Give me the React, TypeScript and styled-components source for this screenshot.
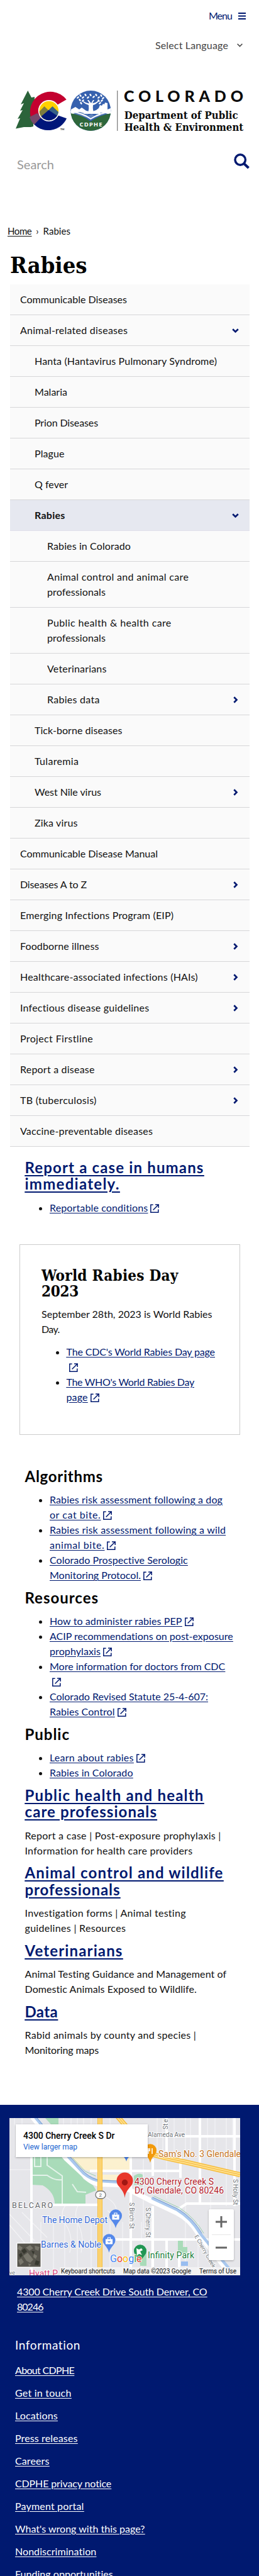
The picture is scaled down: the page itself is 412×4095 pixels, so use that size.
import React, { useLayoutEffect, useRef, useState } from "react";
import styled, { createGlobalStyle } from "styled-components";

const navy = "#001970";
const sans = `"Trebuchet MS", Lato, "Open Sans", sans-serif`;
const slab = `"Museo Slab", "DejaVu Serif Condensed", "DejaVu Serif", serif`;

const GlobalStyle = createGlobalStyle`
  * { box-sizing: border-box; }
  body { margin: 0; background: #fff; color: #111; font: 16px/24px ${sans}; }
  a { color: inherit; }
  h1, h2, p, ul { margin: 0; }
`;

/* Text tracked so that each line keeps its designed width in any fallback font. */
const Tracked = styled.span`
  white-space: nowrap;
  text-decoration: inherit;
`;

function Fit({ w, children }: { w: number; children: string }) {
  const ref = useRef<HTMLSpanElement>(null);
  const [spacing, setSpacing] = useState<number | null>(null);
  useLayoutEffect(() => {
    if (ref.current && spacing === null) {
      setSpacing((w - ref.current.getBoundingClientRect().width) / (children.length - 0.5));
    }
  }, [w, children, spacing]);
  return (
    <Tracked ref={ref} style={{ letterSpacing: spacing ?? 0 }}>
      {children}
    </Tracked>
  );
}

type Line = [string, number];

function Lines({ lines }: { lines: Line[] }) {
  return (
    <>
      {lines.map(([text, w], i) => (
        <React.Fragment key={i}>
          {i > 0 && <br />}
          <Fit w={w}>{text}</Fit>
        </React.Fragment>
      ))}
    </>
  );
}

const Page = styled.div`
  width: 412px;
  height: 4095px;
  overflow: hidden;
`;

/* ---------- header ---------- */

const Header = styled.header`
  display: flex;
  flex-direction: column;
  height: 355px;
  padding-top: 13px;
`;

const MenuButton = styled.a`
  display: flex;
  align-items: center;
  justify-content: flex-end;
  gap: 10px;
  padding-right: 21px;
  color: ${navy};
  text-decoration: none;
`;

const LanguagePicker = styled.div`
  display: flex;
  align-items: center;
  justify-content: flex-end;
  gap: 14px;
  margin-top: 23px;
  padding-right: 26px;
  color: #444;
`;

const Brand = styled.a`
  display: block;
  height: 64px;
  margin: 60px 0 0 25px;
`;

const LogoSvg = styled.svg`
  display: block;
  overflow: visible;
`;

const SearchBar = styled.div`
  display: flex;
  justify-content: space-between;
  align-items: flex-start;
  margin-top: 36px;
  padding: 0 15px 0 27px;
  color: #999;
  font-size: 20px;
`;

const SearchLabel = styled.span`
  margin-top: 5px;
`;

const Breadcrumb = styled.nav`
  display: flex;
  padding-left: 12px;
  font-size: 15px;
  gap: 7px;
`;

const Crumb = styled.a`
  color: #111;
  text-decoration: underline;
  text-underline-offset: 2px;
`;

const Title = styled.h1`
  margin: 22px 0 11px 16px;
  font: 700 36px/40px ${slab};
  color: #000;
`;

/* ---------- side navigation ---------- */

const SideNav = styled.ul`
  width: 381px;
  margin-left: 16px;
  padding: 0;
  list-style: none;
  background: #fafafa;
`;

const NavRow = styled.li<{ $level: number; $active?: boolean }>`
  display: flex;
  align-items: center;
  justify-content: space-between;
  padding: 12px 17px 12px ${(p) => [16, 39, 59][p.$level]}px;
  border-bottom: 1px solid ${(p) => (p.$active ? "#dfdfe9" : "#d6d6d8")};
  background: ${(p) => (p.$active ? "#e6e8f0" : "#fafafa")};
  font-weight: ${(p) => (p.$active ? 700 : 400)};
`;

/* ---------- article ---------- */

const Article = styled.main`
  height: 1523px;
  padding: 20px 0 0 39.5px;
`;

const Heading = styled.h2<{ $link?: boolean }>`
  margin: 10.6px 0 12px;
  font-size: 24px;
  line-height: 26.4px;
  color: ${(p) => (p.$link ? navy : "#000")};
  text-decoration: ${(p) => (p.$link ? "underline" : "none")};
  text-decoration-thickness: 2px;
  text-underline-offset: 3px;
  &:first-child { margin-top: 0; }
`;

const LinkList = styled.ul`
  padding-left: 39.5px;
`;

const TextLink = styled.a`
  color: ${navy};
  text-decoration: underline;
  text-underline-offset: 2px;
`;

const Card = styled.section`
  width: 351px;
  height: 303px;
  margin: 46px 0 53px -9px;
  padding: 36px 0 0 34.5px;
  border: 1px solid #ccc;
`;

const CardTitle = styled.h2`
  margin-bottom: 12px;
  font: 700 24px/25px ${slab};
  color: #000;
`;

const CardText = styled.p`
  margin-bottom: 12px;
`;

/* ---------- footer ---------- */

const Footer = styled.footer`
  min-height: 749px;
  padding: 21px 0 0 15px;
  background: #001970;
  color: #fff;
`;

const MapFrame = styled.div`
  position: relative;
  width: 367px;
  height: 250px;
  overflow: hidden;
  font-family: Roboto, sans-serif;
`;

const MapInfo = styled.div`
  position: absolute;
  left: 10px;
  top: 10px;
  width: 210px;
  height: 52px;
  padding: 9px 12px;
  background: #fff;
  box-shadow: 0 1px 3px rgba(0, 0, 0, 0.3);
  color: #000;
  font-size: 14px;
  line-height: 18px;
  font-weight: 500;
`;

const MapLink = styled.div`
  color: #1a64d0;
  font-size: 12px;
  font-weight: 400;
`;

const ZoomControl = styled.div`
  position: absolute;
  right: 10px;
  top: 145px;
  width: 40px;
  height: 81px;
  background: #fff;
  border-radius: 2px;
  box-shadow: 0 1px 3px rgba(0, 0, 0, 0.3);
`;

const MapCredits = styled.div`
  position: absolute;
  right: 0;
  bottom: 0;
  display: flex;
  gap: 13px;
  padding: 0 6px 0 2px;
  background: rgba(245, 245, 245, 0.8);
  color: #111;
  font-size: 10px;
  line-height: 13px;
`;

const Address = styled.p`
  padding: 14px 0 0 12px;
  text-decoration: underline;
  text-underline-offset: 2px;
`;

const FooterHeading = styled.div`
  margin: 37px 0 16px 9px;
  font-size: 19px;
`;

const FooterLinks = styled.div`
  display: flex;
  flex-direction: column;
  align-items: flex-start;
  gap: 12px;
  padding-left: 9px;
`;

const FooterLink = styled.a`
  text-decoration: underline;
  text-underline-offset: 2px;
`;

const ExtSvg = styled.svg`
  margin-left: 4px;
  vertical-align: -2px;
`;

/* ---------- icons ---------- */

const ExternalIcon = () => (
  <ExtSvg width="14" height="14" viewBox="0 0 14 14" fill="none" stroke={navy} strokeWidth="1.5">
    <path d="M4.6 1.3H.8v12h12V8.6" />
    <path d="M4.6 9.6 12.6 1.4M8 .9h5.2v5.2" />
  </ExtSvg>
);

const Chevron = ({ open }: { open?: boolean }) => (
  <svg width="11" height="11" viewBox="0 0 11 11" fill="none" stroke={navy} strokeWidth="2.7">
    <path d={open ? "M1.2 3.2 5.5 7.4 9.8 3.2" : "M3.3 1.2 7.5 5.5 3.3 9.8"} />
  </svg>
);

const Logo = () => (
  <LogoSvg width="364" height="66" viewBox="0 0 364 66">
    <path
      fill="#2b633a"
      d="M19.3 0 25 11 30 10 28 57 24 58 13 58 0 60.5 7 44 3 45 11 31 7 32 13 20 8 22Z"
    />
    <path fill="#c3002f" d="M80.7 14.3A32 32 0 1 0 29.5 54L53 32 67.7 21.7Z" />
    <path fill="#76496b" d="M22 42 34 36 46 46 30 54.5Q24 49 22 42Z" />
    <path fill="#00177a" d="M29.5 54 39 44 66 39 81 44.3A32 32 0 0 1 29.5 54Z" />
    <circle cx="52.8" cy="32" r="17" fill="#fff" />
    <clipPath id="sun"><circle cx="52.8" cy="32" r="15.3" /></clipPath>
    <g clipPath="url(#sun)">
      <path fill="#ffd100" d="M37 16h32v32H37z" />
      <path fill="#7d7c40" d="M35 36 45.5 25 57 36V48H35Z" />
      <path fill="#376288" d="M49 34 58.5 25 70 36V48H49Z" />
      <path fill="#00177a" d="M37 44 52.5 31 69 42V49H37Z" />
    </g>
    <text x="71" y="62.5" fontFamily="Lato" fontSize="4" fontWeight="700">TM</text>

    <clipPath id="seal"><circle cx="119.3" cy="32" r="32" /></clipPath>
    <g clipPath="url(#seal)">
      <path fill="#3661ae" d="M87 0h65v64H87z" />
      <path fill="#fff" d="m88 30 7-4 6 4 4-3 7 5 8 2 8-3 4-3 2-5 3 1 2-3 2 1 1-3 4 1v10l5-2v9H88z" />
      <path fill="#6084bd" d="m91 36 11-2 7 2-5 3 12-2-5 5 10-5 6 5 1-5 10 2-4-4 12 1-27 9z" />
      <path fill="#2e673b" d="M87 36q20 3 32 13 14-10 33-13v28H87z" />
      <path fill="none" stroke="#fff" strokeWidth="1.8" d="M87 33q20 3 32.3 12Q133 36 152 33" />
      <path
        fill="#fff"
        d="M115 36q2-7 1-13-5-1-9-5l1-1q5 4 9 3l-3-5 2 0 4 5 3-5 2 0-3 5q5 0 9-4l1 1q-4 5-9 6-1 8 2 13z"
      />
      <g fill="#fff">
        {[
          [99, 11], [103, 8], [107, 11], [111, 7], [115, 11], [119, 7], [124, 10], [128, 7],
          [132, 11], [136, 8], [139, 12], [102, 15], [107, 16], [132, 16], [137, 16], [104, 20], [134, 20],
        ].map(([x, y], i) => (
          <ellipse key={i} cx={x} cy={y} rx="2.2" ry="1.3" transform={`rotate(${i % 2 ? 55 : -40} ${x} ${y})`} />
        ))}
      </g>
    </g>
    <text x="101.5" y="57.3" fill="#fff" fontFamily="Open Sans" fontWeight="700" fontSize="9.6" textLength="36">
      CDPHE
    </text>
    <path stroke="#777" strokeWidth="1.2" d="M161.7 0v64" />
    <g fill="#0b0b0b">
      <text x="172" y="18.2" fontFamily="Lato" fontWeight="900" fontSize="25" textLength="190">
        COLORADO
      </text>
      <g fontFamily="DejaVu Serif Condensed, DejaVu Serif" fontWeight="700" fontSize="16.3">
        <text x="172.7" y="45.3" textLength="181" lengthAdjust="spacingAndGlyphs">Department of Public</text>
        <text x="172.7" y="63.6" textLength="189.5" lengthAdjust="spacingAndGlyphs">{"Health & Environment"}</text>
      </g>
    </g>
  </LogoSvg>
);

const Pin = ({ x, y, s = 1, color }: { x: number; y: number; s?: number; color: string }) => (
  <path
    transform={`translate(${x} ${y}) scale(${s})`}
    fill={color}
    d="M0 0C-1.5-6-4-8.5-7-12.5A10 10 0 1 1 7-12.5C4-8.5 1.5-6 0 0Z"
  />
);

const MapDrawing = () => (
  <svg width="367" height="250" viewBox="0 0 367 250" fontFamily="Roboto">
    <path fill="#e6e6ea" d="M0 0h367v250H0z" />
    <g stroke="#f4f4f6" strokeWidth="1.2" fill="none">
      {[8, 20, 86, 98, 108, 118, 130, 160, 180, 235, 244, 262, 280, 288, 315, 327, 345, 355].map((x) => (
        <path key={x} d={`M${x} 0V60`} />
      ))}
      {[50, 70, 88, 108, 130, 160, 180, 210, 226, 280, 300].map((x) => (
        <path key={x} d={`M${x} 165V250`} />
      ))}
      <path d="M0 82H35M0 153 40 195M0 170 30 205M20 150 60 190M90 138q-12 14 0 32t6 44M110 138q-9 14 0 32t4 44M213 65V185M250 65V128M280 100V150M320 120V180M345 60V140M145 122q25 10 25 25-6 8-14 0" />
    </g>
    <path fill="#a9dbb9" d="M35 60H93L118 97 133 107 138 115 121 122V136H72Q72 118 53 107L35 106Z M57 0H78V10H66Z M198 92q8-6 14-2v18l-14-2z" />
    <g fill="none" stroke="#e4f3ea" strokeWidth="2">
      <path d="M40 60V77H50V60M60 60V75L84 92V136M35 91H60Q72 100 84 98M100 105l8 12 14 1" />
    </g>
    <path fill="#fcf1cf" d="M92 62H192V84H128L112 80Z M148 90H178V105L148 98Z" />
    <g fill="none" stroke="#fff" strokeWidth="4">
      <path d="M35 60V250M65 138H145M128 84H272M218 29H367M150 193H367M193 60V250M228 65V92M250 0V60M303 0V136M272 60V95M228 140V250M250 193V250M270 193V250M268 145 282 136H367M358 0V140" />
    </g>
    <g fill="none" strokeLinecap="round" strokeLinejoin="round">
      <path stroke="#fff" strokeWidth="8" d="M38 0 90 64 118 90Q130 104 145 105L175 106 222 130 265 150Q288 162 300 183L345 240" />
      <path stroke="#a9c8ee" strokeWidth="4.5" d="M42 0 96 64 118 88Q132 99 145 100L175 102M228 128 267 146Q290 160 303 183L350 240" />
      <path stroke="#799bce" strokeWidth="1" d="M44 0 99 64 120 87Q133 98 145 99L175 100M228 126 269 145Q293 160 306 183" />
      <path stroke="#98cdb0" strokeWidth="1" d="M230 124 271 143Q296 160 309 183M101 64 121 85 137 92" />
    </g>
    <g fill="none">
      <path stroke="#f6bd3d" strokeWidth="8" d="M144 0V250" />
      <path stroke="#ffe08b" strokeWidth="5" d="M144 0V250" />
      <path stroke="#f6bd3d" strokeWidth="8" d="M170-5 222 56Q240 62 280 70L367 90" />
      <path stroke="#ffe08b" strokeWidth="5" d="M170-5 222 56Q240 62 280 70L367 90" />
      <path stroke="#f1b43a" strokeWidth="1" d="M144 0V250M170-5 222 56Q240 62 280 70L367 90" />
    </g>
    <path fill="#a9dbb9" d="M268 195h8v10h7v10h-15zM205 208h13v27h-10z" />
    <path fill="#99bdf0" d="M273 228h11v7h-11z" />
    <rect x="137" y="116" width="16" height="12" rx="6" fill="#fff" stroke="#777" strokeWidth="1.3" />
    <text x="142.5" y="125" fontSize="8" fill="#555">2</text>
    <Pin x={224} y={71} color="#f29a0c" />
    <path fill="none" stroke="#fff" strokeWidth="1.6" d="M221 48v9M219 48v4h4v-4M227 48v9" />
    <Pin x={186} y={69} s={0.6} color="#4a80e8" />
    <Pin x={169} y={175} color="#5488ea" />
    <Pin x={158.5} y={214} color="#5488ea" />
    {[[165, 152], [154.5, 191]].map(([x, y]) => (
      <g key={x} fill="none" stroke="#fff" strokeWidth="1.2">
        <path fill="#fff" d={`M${x - 1} ${y + 2}h10v7h-10z`} />
        <path d={`M${x + 2} ${y + 2}v-3h4v3`} />
        <path stroke="#5488ea" d={`M${x + 2} ${y + 5}q2 2 4 0`} />
      </g>
    ))}
    <Pin x={208} y={231} color="#219653" />
    <path fill="#fff" d="m202 207 4 2 4-2 2 3-4 2 3 6-5-2-3 3z" />
    <g transform="translate(183.5 127)">
      <path fill="#e8372c" d="M0 0C-1-9-5-13-9-18A13 13 0 1 1 9-18C5-13 1-9 0 0Z" />
      <circle cy="-24.5" r="4.7" fill="#a11713" />
    </g>
    <g stroke="#fff" strokeWidth="2" paintOrder="stroke" strokeLinejoin="round">
      <text x="220" y="30" fontSize="10.5" fill="#70757a" textLength="59">Alameda Ave</text>
      <text x="237" y="62" fontSize="14" fill="#c6751c" textLength="131">Sam's No. 3 Glendale</text>
      <text x="199" y="106" fontSize="14" fill="#b3202a" textLength="126">4300 Cherry Creek S</text>
      <text x="199" y="120" fontSize="14" fill="#b3202a" textLength="142">Dr, Glendale, CO 80246</text>
      <text x="4" y="142.5" fontSize="12.5" fill="#5f6368" textLength="65">BELCARO</text>
      <text x="52" y="167" fontSize="14" fill="#3267d6" textLength="104">The Home Depot</text>
      <text x="50" y="206" fontSize="14" fill="#3267d6" textLength="96">{"Barnes & Noble"}</text>
      <text x="220" y="223" fontSize="14" fill="#1a7f3c" textLength="74">Infinity Park</text>
      <text x="31" y="252" fontSize="14" fill="#d8437a" textLength="46">Hyatt P</text>
      <text x="0" y="249" fontSize="9" fill="#70757a">ve</text>
      <g fontSize="10" fill="#70757a">
        <text transform="translate(190.5 134) rotate(90)" textLength="42">S Birch St</text>
        <text transform="translate(216.5 142) rotate(90)" textLength="48">S Cherry St</text>
        <text transform="translate(355.5 97) rotate(90)" textLength="41">S Holly St</text>
        <text transform="translate(252 18) rotate(-90)">St</text>
        <text transform="translate(252 7) rotate(-90)">e</text>
        <text fontSize="9" transform="translate(294 188) rotate(60)">E Cherry Creek</text>
      </g>
    </g>
    <text x="160" y="228.5" fontSize="16" stroke="#fff" strokeWidth="1.5" paintOrder="stroke">
      <tspan fill="#4285f4">G</tspan><tspan fill="#ea4335">o</tspan><tspan fill="#fbbc05">o</tspan><tspan fill="#4285f4">g</tspan><tspan fill="#34a853">l</tspan><tspan fill="#ea4335">e</tspan>
    </text>
    <rect x="11" y="198" width="40" height="40" rx="2" fill="#fff" />
    <path fill="#56544c" d="M12.5 199.5h37v37h-37z" />
    <g fill="#79776c">
      <path d="m15 202 6 4-3 5-5-3zM26 206l7-4 5 5-6 4zM40 203l8 2-2 6-5-2zM22 219l7-5 5 6 4 5-5 5-6-3zM14 226l5-3 4 6-6 5zM39 216l5 3-2 5-4-3zM30 231l5 2-4 3z" />
    </g>
    <path fill="#37382f" d="m19 211 5-4 4 5-5 4zM35 211l5 1-2 5zM42 226l6 2-2 6-6-1zM15 217l4-3 2 5-4 3z" />
  </svg>
);

/* ---------- data ---------- */

type NavItem = { level: number; lines: Line[]; arrow?: "open" | "closed"; active?: boolean };

const nav: NavItem[] = [
  { level: 0, lines: [["Communicable Diseases", 170]] },
  { level: 0, lines: [["Animal-related diseases", 171]], arrow: "open" },
  { level: 1, lines: [["Hanta (Hantavirus Pulmonary Syndrome)", 290]] },
  { level: 1, lines: [["Malaria", 52]] },
  { level: 1, lines: [["Prion Diseases", 101]] },
  { level: 1, lines: [["Plague", 47.5]] },
  { level: 1, lines: [["Q fever", 53]] },
  { level: 1, lines: [["Rabies", 48.5]], arrow: "open", active: true },
  { level: 2, lines: [["Rabies in Colorado", 133]] },
  { level: 2, lines: [["Animal control and animal care", 225], ["professionals", 93]] },
  { level: 2, lines: [["Public health & health care", 197.5], ["professionals", 93]] },
  { level: 2, lines: [["Veterinarians", 94.5]] },
  { level: 2, lines: [["Rabies data", 83.5]], arrow: "closed" },
  { level: 1, lines: [["Tick-borne diseases", 139.5]] },
  { level: 1, lines: [["Tularemia", 70]] },
  { level: 1, lines: [["West Nile virus", 106]], arrow: "closed" },
  { level: 1, lines: [["Zika virus", 68.5]] },
  { level: 0, lines: [["Communicable Disease Manual", 219]] },
  { level: 0, lines: [["Diseases A to Z", 106]], arrow: "closed" },
  { level: 0, lines: [["Emerging Infections Program (EIP)", 244.5]] },
  { level: 0, lines: [["Foodborne illness", 125.5]], arrow: "closed" },
  { level: 0, lines: [["Healthcare-associated infections (HAIs)", 283]], arrow: "closed" },
  { level: 0, lines: [["Infectious disease guidelines", 205.5]], arrow: "closed" },
  { level: 0, lines: [["Project Firstline", 116]] },
  { level: 0, lines: [["Report a disease", 118.5]], arrow: "closed" },
  { level: 0, lines: [["TB (tuberculosis)", 121.5]], arrow: "closed" },
  { level: 0, lines: [["Vaccine-preventable diseases", 211]] },
];

type LinkItem = { lines: Line[]; ext?: "inline" | "wrapped" };

const algorithms: LinkItem[] = [
  { lines: [["Rabies risk assessment following a dog", 275], ["or cat bite.", 81]], ext: "inline" },
  { lines: [["Rabies risk assessment following a wild", 280], ["animal bite.", 87]], ext: "inline" },
  { lines: [["Colorado Prospective Serologic", 220], ["Monitoring Protocol.", 145]], ext: "inline" },
];

const resources: LinkItem[] = [
  { lines: [["How to administer rabies PEP", 210.5]], ext: "inline" },
  { lines: [["ACIP recommendations on post-exposure", 292], ["prophylaxis", 81]], ext: "inline" },
  { lines: [["More information for doctors from CDC", 279.5]], ext: "wrapped" },
  { lines: [["Colorado Revised Statute 25-4-607:", 252], ["Rabies Control", 103.5]], ext: "inline" },
];

const publicLinks: LinkItem[] = [
  { lines: [["Learn about rabies", 133.5]], ext: "inline" },
  { lines: [["Rabies in Colorado", 132.5]] },
];

const dayLinks: LinkItem[] = [
  { lines: [["The CDC's World Rabies Day page", 236.5]], ext: "wrapped" },
  { lines: [["The WHO's World Rabies Day", 203.5], ["page", 34]], ext: "inline" },
];

const footerLinks: Line[] = [
  ["About CDPHE", 94.5],
  ["Get in touch", 89.5],
  ["Locations", 68],
  ["Press releases", 99.5],
  ["Careers", 54.5],
  ["CDPHE privacy notice", 153.5],
  ["Payment portal", 109.5],
  ["What's wrong with this page?", 206.5],
  ["Nondiscrimination", 129.5],
  ["Funding opportunities", 156],
];

const Links = ({ items }: { items: LinkItem[] }) => (
  <LinkList>
    {items.map((item, i) => (
      <li key={i}>
        <TextLink>
          <Lines lines={item.lines} />
        </TextLink>
        {item.ext === "wrapped" && <br />}
        {item.ext && <ExternalIcon />}
      </li>
    ))}
  </LinkList>
);

export default function App() {
  return (
    <Page>
      <GlobalStyle />
      <Header>
        <MenuButton>
          <Fit w={37.5}>Menu</Fit>
          <svg width="12" height="11" viewBox="0 0 12 11" stroke={navy} strokeWidth="2">
            <path d="M0 1h12M0 5.5h12M0 10h12" />
          </svg>
        </MenuButton>
        <LanguagePicker>
          <Fit w={116}>Select Language</Fit>
          <svg width="9" height="6" viewBox="0 0 9 6" fill="none" stroke="#444" strokeWidth="1.5">
            <path d="M.6.7 4.5 4.6 8.4.7" />
          </svg>
        </LanguagePicker>
        <Brand><Logo /></Brand>
        <SearchBar>
          <SearchLabel><Fit w={59}>Search</Fit></SearchLabel>
          <svg width="25" height="25" viewBox="0 0 25 25" fill="none" stroke={navy}>
            <circle cx="10.2" cy="10" r="8.2" strokeWidth="3.4" />
            <path d="m16 16 7.5 7" strokeWidth="4" />
          </svg>
        </SearchBar>
      </Header>
      <Breadcrumb>
        <Crumb><Fit w={38.5}>Home</Fit></Crumb>
        <span>›</span>
        <Fit w={43.5}>Rabies</Fit>
      </Breadcrumb>
      <Title><Fit w={122.5}>Rabies</Fit></Title>
      <SideNav>
        {nav.map((item, i) => (
          <NavRow key={i} $level={item.level} $active={item.active}>
            <span><Lines lines={item.lines} /></span>
            {item.arrow && <Chevron open={item.arrow === "open"} />}
          </NavRow>
        ))}
      </SideNav>
      <Article>
        <Heading $link><Lines lines={[["Report a case in humans", 284.5], ["immediately.", 150.5]]} /></Heading>
        <Links items={[{ lines: [["Reportable conditions", 156.5]], ext: "inline" }]} />
        <Card>
          <CardTitle><Lines lines={[["World Rabies Day", 217.5], ["2023", 59]]} /></CardTitle>
          <CardText><Lines lines={[["September 28th, 2023 is World Rabies", 271.5], ["Day.", 29]]} /></CardText>
          <Links items={dayLinks} />
        </Card>
        <Heading><Fit w={124}>Algorithms</Fit></Heading>
        <Links items={algorithms} />
        <Heading><Fit w={117}>Resources</Fit></Heading>
        <Links items={resources} />
        <Heading><Fit w={71}>Public</Fit></Heading>
        <Links items={publicLinks} />
        <Heading $link><Lines lines={[["Public health and health", 284.5], ["care professionals", 210]]} /></Heading>
        <p><Lines lines={[["Report a case | Post-exposure prophylaxis |", 312], ["Information for health care providers", 267]]} /></p>
        <Heading $link><Lines lines={[["Animal control and wildlife", 315.5], ["professionals", 151.5]]} /></Heading>
        <p><Lines lines={[["Investigation forms | Animal testing", 257], ["guidelines | Resources", 160.5]]} /></p>
        <Heading $link><Fit w={155.5}>Veterinarians</Fit></Heading>
        <p><Lines lines={[["Animal Testing Guidance and Management of", 321], ["Domestic Animals Exposed to Wildlife.", 273.5]]} /></p>
        <Heading $link><Fit w={52.5}>Data</Fit></Heading>
        <p><Lines lines={[["Rabid animals by county and species |", 272.5], ["Monitoring maps", 117.5]]} /></p>
      </Article>
      <Footer>
        <MapFrame>
          <MapDrawing />
          <MapInfo>
            <Fit w={145.5}>4300 Cherry Creek S Dr</Fit>
            <MapLink><Fit w={86}>View larger map</Fit></MapLink>
          </MapInfo>
          <ZoomControl>
            <svg width="40" height="81" viewBox="0 0 40 81" stroke="#666" strokeWidth="3">
              <path d="M11 20h18M20 11v18M11 61h18" />
              <path stroke="#e6e6e6" strokeWidth="1" d="M5 40.5h30" />
            </svg>
          </ZoomControl>
          <MapCredits>
            <Fit w={86}>Keyboard shortcuts</Fit>
            <Fit w={108}>Map data ©2023 Google</Fit>
            <Fit w={59}>Terms of Use</Fit>
          </MapCredits>
        </MapFrame>
        <Address><Lines lines={[["4300 Cherry Creek Drive South Denver, CO", 302.5], ["80246", 42]]} /></Address>
        <FooterHeading><Fit w={104}>Information</Fit></FooterHeading>
        <FooterLinks>
          {footerLinks.map(([text, w]) => (
            <FooterLink key={text}><Fit w={w}>{text}</Fit></FooterLink>
          ))}
        </FooterLinks>
      </Footer>
    </Page>
  );
}
